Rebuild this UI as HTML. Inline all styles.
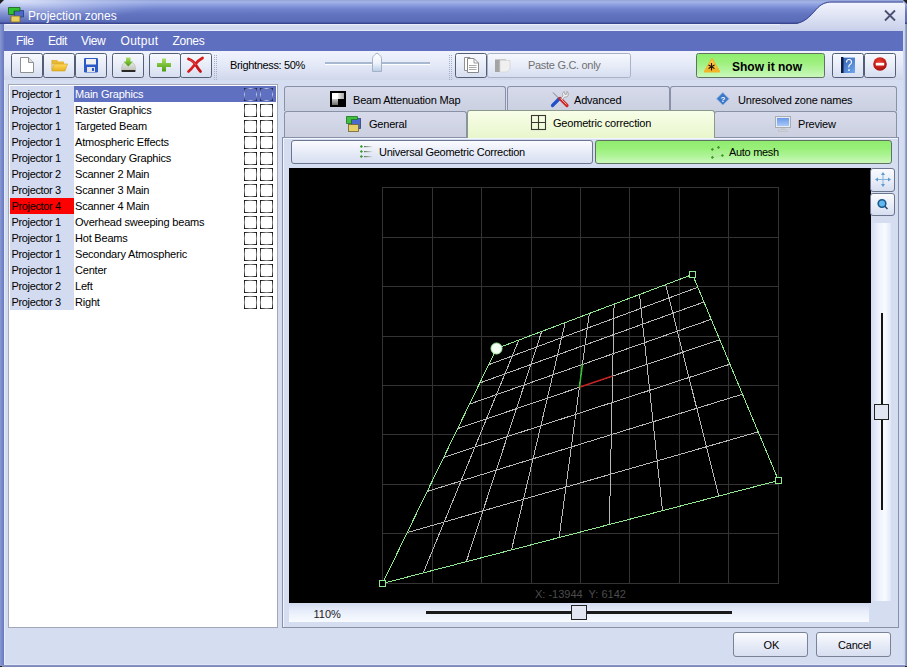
<!DOCTYPE html>
<html><head><meta charset="utf-8">
<style>
*{margin:0;padding:0;box-sizing:border-box}
html,body{width:907px;height:667px;overflow:hidden;background:#d5ddf1;font-family:"Liberation Sans",sans-serif;font-size:11px;color:#000}
.a{position:absolute}
.t{position:absolute;white-space:pre;line-height:1}
#title{left:0;top:0;width:907px;height:24px;background:linear-gradient(#95a3d4 0,#a2b4e8 2px,#8c9ede 5px,#7284cc 9px,#6274c0 14px,#5a6bb8 22px,#3a4690 23px)}
#menubar{left:4px;top:31px;width:899px;height:20px;background:#5f6fbf}
.menu{color:#fff;font-size:12px;top:35px;letter-spacing:-0.2px}
#toolbar{left:4px;top:51px;width:899px;height:29px;background:linear-gradient(#f0f3fd,#e4e9f7 50%,#d0d7eb)}
.tb{position:absolute;top:53px;height:25px;border:1px solid #545e76;border-radius:2.5px;background:linear-gradient(#f6f8fd,#e6ebf7 55%,#d6def0)}
#list{left:8px;top:84px;width:270px;height:544px;background:#fff;border:1px solid #a2a8ba}
.row{position:absolute;left:10px;width:266px;height:16px}
.c1{position:absolute;left:0;top:0;width:64px;height:16px;background:#d3dbf0}
.c1 span,.c2 span{position:absolute;top:3px;white-space:pre;line-height:1;letter-spacing:-0.2px}
.c1 span{left:1.5px;letter-spacing:-0.35px}
.c2{position:absolute;left:64px;top:0;width:202px;height:16px}
.c2 span{left:1px}
.cb{position:absolute;top:2px;width:13px;height:13px;background:linear-gradient(90deg,#0a0a0a,#8a8a8a 50%,#0a0a0a) top/100% 1px no-repeat,linear-gradient(90deg,#0a0a0a,#8a8a8a 50%,#0a0a0a) bottom/100% 1px no-repeat,linear-gradient(#0a0a0a,#8a8a8a 50%,#0a0a0a) left/1px 100% no-repeat,linear-gradient(#0a0a0a,#8a8a8a 50%,#0a0a0a) right/1px 100% no-repeat}
.sel .cb{background:linear-gradient(90deg,#101850,#b8c4f0 50%,#101850) top/100% 1px no-repeat,linear-gradient(90deg,#101850,#b8c4f0 50%,#101850) bottom/100% 1px no-repeat,linear-gradient(#101850,#b8c4f0 50%,#101850) left/1px 100% no-repeat,linear-gradient(#101850,#b8c4f0 50%,#101850) right/1px 100% no-repeat}
.tab{position:absolute;height:25px;border:1px solid #8a90a6;border-bottom:none;border-radius:3px 3px 0 0;background:linear-gradient(#d6daea,#cbd0e1)}
.tab span{position:absolute;top:8px;white-space:pre;line-height:1;letter-spacing:-0.2px}
#panel{left:282px;top:137px;width:617px;height:491px;border:1px solid #8a90a6;background:#d5ddf1;box-shadow:inset 1px 1px 0 #f2f5ff}
.btn{position:absolute;border:1px solid #6c7590;border-radius:3px}
#canvas{left:289px;top:168px;width:582px;height:435px;background:#000}
</style></head><body>
<!-- title bar -->
<div class="a" id="title"></div>
<svg class="a" style="left:0;top:0" width="907" height="32" viewBox="0 0 907 32">
<defs>
<linearGradient id="gsw" x1="0" y1="0" x2="0" y2="1"><stop offset="0" stop-color="#f2f4fd"/><stop offset="0.5" stop-color="#dde2f3"/><stop offset="1" stop-color="#c8d0ea"/></linearGradient>
<linearGradient id="gstrip" x1="0" y1="0" x2="0" y2="1"><stop offset="0" stop-color="#f4f6ff"/><stop offset="0.25" stop-color="#d4dbef"/><stop offset="0.75" stop-color="#d0d8ee"/><stop offset="1" stop-color="#eef2ff"/></linearGradient>
<linearGradient id="gglow" x1="0" y1="0" x2="1" y2="0"><stop offset="0" stop-color="#d0d8f0" stop-opacity="0.9"/><stop offset="0.15" stop-color="#c0cbee" stop-opacity="0.4"/><stop offset="0.5" stop-color="#c0cbee" stop-opacity="0"/></linearGradient>
<radialGradient id="gglow2" gradientUnits="userSpaceOnUse" cx="20" cy="0" r="140" gradientTransform="translate(20 0) scale(1 0.16) translate(-20 0)"><stop offset="0" stop-color="#e0e6fa" stop-opacity="0.9"/><stop offset="0.5" stop-color="#c8d2f4" stop-opacity="0.45"/><stop offset="1" stop-color="#b0c0f0" stop-opacity="0"/></radialGradient>
</defs>
<rect x="0" y="0" width="907" height="23" fill="url(#gglow2)"/>
<path d="M0,0 L4,0 L0,4 Z" fill="#202020"/>
<path d="M903,0 L907,0 L907,4 Z" fill="#202020"/>
<path d="M4,31 V27 Q4,24 7,24 H902 V31 Z" fill="url(#gstrip)"/>
<path d="M780,24 H794 C803,24 810,17 816,10 C821,4.5 825,2.5 832,2.5 H903 Q905,2.5 905,5 V31 H780 Z" fill="url(#gsw)"/>
<path d="M780,23.5 H794 C803,23.5 810,16.5 816,9.5 C821,4 825,2 832,2 H903" fill="none" stroke="#3a4690" stroke-width="1"/>
<rect x="0" y="23" width="780" height="1" fill="#3a4690"/>
<path d="M885,10.5 L895,20.5 M895,10.5 L885,20.5" stroke="#4a5070" stroke-width="1.8"/>
<!-- app icon -->
<path d="M14.5,10.5 H23.5 V17 H14.5 Z" fill="#4a68c8" stroke="#2a3a80" stroke-width="0.8"/>
<path d="M8.5,7.5 H20 V11 H14 V14.5 H8.5 Z" fill="#30c030" stroke="#186018" stroke-width="0.8"/>
<rect x="11" y="16" width="9" height="6" fill="#e8d060" stroke="#806820" stroke-width="0.8"/>
</svg>

<div class="t" style="left:28px;top:10px;font-size:12px;color:#fff">Projection zones</div>
<div class="a" style="left:0;top:24px;width:4px;height:643px;background:linear-gradient(90deg,#8898d0,#7888c8 50%,#6878c0)"></div>
<div class="a" style="left:4px;top:31px;width:1px;height:634px;background:#e4eaff"></div>
<div class="a" style="left:903px;top:31px;width:2px;height:636px;background:linear-gradient(90deg,#d4dcf4,#c4d2ec)"></div>
<div class="a" style="left:905px;top:24px;width:2px;height:643px;background:linear-gradient(90deg,#a4b2d8,#7484ac)"></div>
<div class="a" style="left:4px;top:664px;width:901px;height:1px;background:#e0e6fa"></div>
<div class="a" style="left:0;top:665px;width:907px;height:2px;background:linear-gradient(#8e98c4,#7a84b4)"></div>
<div class="a" style="left:0;top:666px;width:2px;height:1px;background:#222"></div><div class="a" style="left:905px;top:666px;width:2px;height:1px;background:#222"></div>
<!-- menu -->
<div class="a" id="menubar"></div>
<div class="t menu" style="left:16px;letter-spacing:-0.45px">File</div>
<div class="t menu" style="left:48px;letter-spacing:-0.45px">Edit</div>
<div class="t menu" style="left:81px;letter-spacing:-0.35px">View</div>
<div class="t menu" style="left:120.5px;letter-spacing:0.3px">Output</div>
<div class="t menu" style="left:172.5px;letter-spacing:-0.3px">Zones</div>
<!-- toolbar -->
<div class="a" id="toolbar"></div>
<div class="tb" style="left:11px;width:32px"></div>
<div class="tb" style="left:43px;width:32px"></div>
<div class="tb" style="left:75px;width:32px"></div>
<div class="tb" style="left:112px;width:32px"></div>
<div class="tb" style="left:149px;width:32px"></div>
<div class="tb" style="left:180px;width:32px"></div>
<div class="t" style="left:230px;top:60px;letter-spacing:-0.34px">Brightness: 50%</div>
<div class="tb" style="left:455px;width:32px"></div>
<div class="tb" style="left:487px;width:144px;border-color:#aab2c8"></div>
<div class="t" style="left:528px;top:60px;color:#707070;letter-spacing:-0.3px">Paste G.C. only</div>
<div class="tb" style="left:696px;width:129px;border-color:#5e7460;background:linear-gradient(#8eee6e,#9cf07c 35%,#b4f49e 70%,#ccf8bc)"></div>
<div class="t" style="left:732px;top:61px;font-weight:bold;font-size:12px">Show it now</div>
<div class="tb" style="left:832px;width:32px"></div>
<div class="tb" style="left:864px;width:32px"></div>
<svg class="a" style="left:0;top:0" width="907" height="90" viewBox="0 0 907 90">
<defs>
<linearGradient id="gfold" x1="0" y1="0" x2="0" y2="1"><stop offset="0" stop-color="#ffd95a"/><stop offset="1" stop-color="#e8b020"/></linearGradient>
<linearGradient id="ggreen" x1="0" y1="0" x2="0" y2="1"><stop offset="0" stop-color="#a8e060"/><stop offset="1" stop-color="#4a9a10"/></linearGradient>
<linearGradient id="gtray" x1="0" y1="0" x2="0" y2="1"><stop offset="0" stop-color="#e8ece4"/><stop offset="1" stop-color="#b8bcb4"/></linearGradient>
</defs>
<!-- new doc -->
<path d="M20.5,57.5 H28.5 L33.5,62.5 V72.5 H20.5 Z" fill="#fff" stroke="#909090"/>
<path d="M28.5,57.5 V62.5 H33.5" fill="#e0e0e0" stroke="#909090"/>
<!-- folder -->
<path d="M52,60 H57 L58.5,61.5 H64 V64 H52 Z" fill="#e8b838"/>
<path d="M52,71 L54,64 H67.5 L65,71 Z" fill="url(#gfold)" stroke="#d0a020" stroke-width="0.6"/>
<path d="M52,60 V71" stroke="#d8a828" stroke-width="1"/>
<!-- floppy -->
<rect x="84" y="58" width="14" height="14.5" rx="1.2" fill="#2a5ac8"/>
<rect x="86" y="59" width="10" height="5.5" fill="#f0f0f0"/>
<rect x="87" y="67" width="8" height="5" fill="#e4e4e4"/>
<rect x="92" y="68" width="2" height="3" fill="#2a5ac8"/>
<!-- import -->
<path d="M121.5,71 V67.5 Q122,63 125.5,62.5 H131.5 Q135,63 135.5,67.5 V71 Z" fill="url(#gtray)" stroke="#b8bcb0" stroke-width="0.6"/>
<rect x="121.5" y="70" width="14" height="2" rx="0.8" fill="#282828"/>
<path d="M126,57.5 H130.5 V61.5 H133 L128.3,66.5 L123.5,61.5 H126 Z" fill="url(#ggreen)"/>
<!-- plus -->
<path d="M162,58.5 H166 V63 H171 V67 H166 V71.5 H162 V67 H157 V63 H162 Z" fill="url(#ggreen)"/>
<!-- red X -->
<path d="M188.5,59 Q194,61 196.5,66 Q199,70 200.5,71.5" fill="none" stroke="#c81414" stroke-width="2.8" stroke-linecap="round"/>
<path d="M202.5,58 Q197,61 194,65.5 Q191,69.5 188.5,71.5" fill="none" stroke="#d81c1c" stroke-width="2.8" stroke-linecap="round"/>
<path d="M189.5,59.5 Q194,61.5 196,65" fill="none" stroke="#f06060" stroke-width="0.8"/>
<!-- copy icon -->
<path d="M464.5,57.5 H470 L472.5,60 V70.5 H464.5 Z" fill="#fff" stroke="#909090"/>
<path d="M467.5,58.5 H474 L478.5,63 V72.5 H467.5 Z" fill="#fff" stroke="#888"/>
<path d="M474,58.5 V63 H478.5" fill="none" stroke="#999"/>
<path d="M469,65.5 H476.5 M469,67.5 H476.5 M469,69.5 H476.5" stroke="#a8a8a8"/>
<!-- paste disabled icon -->
<rect x="495" y="59.5" width="5" height="12.5" fill="#a4a4a4"/>
<path d="M500,60.5 H510 V69 L507,72 H500 Z" fill="#f0f0f0" stroke="#d4d4d4" stroke-width="0.8"/>
<path d="M497,59.5 H506" stroke="#c8c8c8"/>
<!-- show it now warning -->
<path d="M712,58.3 Q712.6,58.3 713,59 L720,71 Q720.3,72.6 719,72.6 H705 Q703.7,72.6 704,71 L711,59 Q711.4,58.3 712,58.3 Z" fill="#f4b428"/>
<path d="M712,59.5 L717,68 H707 Z" fill="#fcd050" opacity="0.7"/>
<g stroke="#201000" stroke-width="1.1"><path d="M711.5,63 V70.5 M708.5,65 L714.5,68.5 M714.5,65 L708.5,68.5"/></g>
<!-- help book -->
<defs><linearGradient id="gbook" x1="0" y1="0" x2="1" y2="1"><stop offset="0" stop-color="#2a58a8"/><stop offset="1" stop-color="#70a8f0"/></linearGradient>
<radialGradient id="gstop" cx="0.45" cy="0.35" r="0.7"><stop offset="0" stop-color="#f04030"/><stop offset="1" stop-color="#a00808"/></radialGradient></defs>
<rect x="841" y="57" width="14" height="16" fill="url(#gbook)"/>
<rect x="841" y="57" width="2.5" height="16" fill="#0c1c40"/>
<path d="M843.5,57.5 H855" stroke="#a8c8f0" stroke-width="1"/>
<path d="M846.5,62.5 Q846.5,59.5 849,59.5 Q851.5,59.5 851.5,62 Q851.5,64 849.5,65 Q848.8,65.5 848.8,67.5" fill="none" stroke="#fff" stroke-width="1.1"/>
<rect x="848.2" y="69.3" width="1.6" height="1.6" fill="#fff"/>
<!-- stop -->
<circle cx="880" cy="64" r="6.8" fill="url(#gstop)"/>
<rect x="875.8" y="62.8" width="8.4" height="2.7" fill="#fff"/>
<!-- grippers -->
<g fill="#a8b0c8">
<rect x="214" y="55" width="1" height="1"/><rect x="216" y="55" width="1" height="1"/><rect x="214" y="57" width="1" height="1"/><rect x="216" y="57" width="1" height="1"/><rect x="214" y="59" width="1" height="1"/><rect x="216" y="59" width="1" height="1"/><rect x="214" y="61" width="1" height="1"/><rect x="216" y="61" width="1" height="1"/><rect x="214" y="63" width="1" height="1"/><rect x="216" y="63" width="1" height="1"/><rect x="214" y="65" width="1" height="1"/><rect x="216" y="65" width="1" height="1"/><rect x="214" y="67" width="1" height="1"/><rect x="216" y="67" width="1" height="1"/><rect x="214" y="69" width="1" height="1"/><rect x="216" y="69" width="1" height="1"/><rect x="214" y="71" width="1" height="1"/><rect x="216" y="71" width="1" height="1"/><rect x="214" y="73" width="1" height="1"/><rect x="216" y="73" width="1" height="1"/><rect x="214" y="75" width="1" height="1"/><rect x="216" y="75" width="1" height="1"/><rect x="214" y="77" width="1" height="1"/><rect x="216" y="77" width="1" height="1"/><rect x="214" y="79" width="1" height="1"/><rect x="216" y="79" width="1" height="1"/><rect x="449" y="55" width="1" height="1"/><rect x="451" y="55" width="1" height="1"/><rect x="449" y="57" width="1" height="1"/><rect x="451" y="57" width="1" height="1"/><rect x="449" y="59" width="1" height="1"/><rect x="451" y="59" width="1" height="1"/><rect x="449" y="61" width="1" height="1"/><rect x="451" y="61" width="1" height="1"/><rect x="449" y="63" width="1" height="1"/><rect x="451" y="63" width="1" height="1"/><rect x="449" y="65" width="1" height="1"/><rect x="451" y="65" width="1" height="1"/><rect x="449" y="67" width="1" height="1"/><rect x="451" y="67" width="1" height="1"/><rect x="449" y="69" width="1" height="1"/><rect x="451" y="69" width="1" height="1"/><rect x="449" y="71" width="1" height="1"/><rect x="451" y="71" width="1" height="1"/><rect x="449" y="73" width="1" height="1"/><rect x="451" y="73" width="1" height="1"/><rect x="449" y="75" width="1" height="1"/><rect x="451" y="75" width="1" height="1"/><rect x="449" y="77" width="1" height="1"/><rect x="451" y="77" width="1" height="1"/><rect x="449" y="79" width="1" height="1"/><rect x="451" y="79" width="1" height="1"/></g>
</svg>
<svg class="a" style="left:320px;top:50px" width="120" height="30" viewBox="320 50 120 30">
<rect x="325" y="62" width="105" height="2" fill="#a8b8d0"/>
<rect x="325" y="64" width="105" height="1" fill="#ffffff"/>
<path d="M372.5,71.5 V58.5 Q372.5,56.5 375,54.5 L377,53 L379,54.5 Q381.5,56.5 381.5,58.5 V71.5 Z" fill="url(#gthumb)" stroke="#a4b2c8"/>
<defs><linearGradient id="gthumb" x1="0" y1="0" x2="0" y2="1"><stop offset="0" stop-color="#ffffff"/><stop offset="0.55" stop-color="#eef3fb"/><stop offset="1" stop-color="#b8cce6"/></linearGradient></defs>
</svg>

<!-- list -->
<div class="a" id="list"></div>
<div class="row sel" style="top:86px"><div class="c1" style="background:#d3dbf0"><span>Projector 1</span></div><div class="c2" style="background:#6070c0;color:#fff"><span>Main Graphics</span></div><div class="cb" style="left:234px"></div><div class="cb" style="left:250px"></div></div>
<div class="row" style="top:102px"><div class="c1" style="background:#d3dbf0"><span>Projector 1</span></div><div class="c2"><span>Raster Graphics</span></div><div class="cb" style="left:234px"></div><div class="cb" style="left:250px"></div></div>
<div class="row" style="top:118px"><div class="c1" style="background:#d3dbf0"><span>Projector 1</span></div><div class="c2"><span>Targeted Beam</span></div><div class="cb" style="left:234px"></div><div class="cb" style="left:250px"></div></div>
<div class="row" style="top:134px"><div class="c1" style="background:#d3dbf0"><span>Projector 1</span></div><div class="c2"><span>Atmospheric Effects</span></div><div class="cb" style="left:234px"></div><div class="cb" style="left:250px"></div></div>
<div class="row" style="top:150px"><div class="c1" style="background:#d3dbf0"><span>Projector 1</span></div><div class="c2"><span>Secondary Graphics</span></div><div class="cb" style="left:234px"></div><div class="cb" style="left:250px"></div></div>
<div class="row" style="top:166px"><div class="c1" style="background:#d3dbf0"><span>Projector 2</span></div><div class="c2"><span>Scanner 2 Main</span></div><div class="cb" style="left:234px"></div><div class="cb" style="left:250px"></div></div>
<div class="row" style="top:182px"><div class="c1" style="background:#d3dbf0"><span>Projector 3</span></div><div class="c2"><span>Scanner 3 Main</span></div><div class="cb" style="left:234px"></div><div class="cb" style="left:250px"></div></div>
<div class="row" style="top:198px"><div class="c1" style="background:#ff0000"><span>Projector 4</span></div><div class="c2"><span>Scanner 4 Main</span></div><div class="cb" style="left:234px"></div><div class="cb" style="left:250px"></div></div>
<div class="row" style="top:214px"><div class="c1" style="background:#d3dbf0"><span>Projector 1</span></div><div class="c2"><span>Overhead sweeping beams</span></div><div class="cb" style="left:234px"></div><div class="cb" style="left:250px"></div></div>
<div class="row" style="top:230px"><div class="c1" style="background:#d3dbf0"><span>Projector 1</span></div><div class="c2"><span>Hot Beams</span></div><div class="cb" style="left:234px"></div><div class="cb" style="left:250px"></div></div>
<div class="row" style="top:246px"><div class="c1" style="background:#d3dbf0"><span>Projector 1</span></div><div class="c2"><span>Secondary Atmospheric</span></div><div class="cb" style="left:234px"></div><div class="cb" style="left:250px"></div></div>
<div class="row" style="top:262px"><div class="c1" style="background:#d3dbf0"><span>Projector 1</span></div><div class="c2"><span>Center</span></div><div class="cb" style="left:234px"></div><div class="cb" style="left:250px"></div></div>
<div class="row" style="top:278px"><div class="c1" style="background:#d3dbf0"><span>Projector 2</span></div><div class="c2"><span>Left</span></div><div class="cb" style="left:234px"></div><div class="cb" style="left:250px"></div></div>
<div class="row" style="top:294px"><div class="c1" style="background:#d3dbf0"><span>Projector 3</span></div><div class="c2"><span>Right</span></div><div class="cb" style="left:234px"></div><div class="cb" style="left:250px"></div></div>
<!-- tabs -->
<div class="tab" style="left:284px;top:86px;width:222px"><span style="left:68px">Beam Attenuation Map</span></div>
<div class="tab" style="left:507px;top:86px;width:163px"><span style="left:66px">Advanced</span></div>
<div class="tab" style="left:670px;top:86px;width:227px"><span style="left:67px">Unresolved zone names</span></div>
<div class="tab" style="left:284px;top:111px;width:183px;height:26px"><span style="left:84px;top:7px">General</span></div>
<div class="tab" style="left:714px;top:111px;width:183px;height:26px"><span style="left:83px;top:7px">Preview</span></div>
<div class="a" id="panel"></div>
<div class="tab" style="left:467px;top:110px;width:248px;height:28px;background:linear-gradient(#f8fee8,#e8f6cc);border-color:#8a9a8a"><span style="left:85px;top:7px">Geometric correction</span></div>
<div class="btn" style="left:291px;top:140px;width:302px;height:24px;background:linear-gradient(#fafbff,#e4e9f6 60%,#d8dff0)"></div>
<div class="t" style="left:379px;top:147px;letter-spacing:-0.25px">Universal Geometric Correction</div>
<div class="btn" style="left:595px;top:140px;width:297px;height:24px;border-color:#5e7460;background:linear-gradient(#90ec70,#9af07a 35%,#b0f49a 70%,#ccf8bc)"></div>
<div class="t" style="left:729px;top:147px;letter-spacing:-0.3px">Auto mesh</div>
<svg class="a" style="left:280px;top:84px" width="627" height="84" viewBox="280 84 627 84">
<defs>
<linearGradient id="gbl" x1="0" y1="0" x2="0" y2="1"><stop offset="0" stop-color="#c8c8c8"/><stop offset="1" stop-color="#6a6a6a"/></linearGradient>
<linearGradient id="gtr" x1="0" y1="0" x2="1" y2="0"><stop offset="0" stop-color="#e8e8e8"/><stop offset="1" stop-color="#a8a8a8"/></linearGradient>
<linearGradient id="gscr" x1="0" y1="0" x2="0" y2="1"><stop offset="0" stop-color="#6a98e8"/><stop offset="1" stop-color="#a8c8f8"/></linearGradient>
</defs>
<!-- beam attenuation -->
<rect x="331" y="92" width="14" height="14" fill="#fff" stroke="#000" stroke-width="2"/>
<rect x="338" y="93" width="6" height="6" fill="url(#gtr)"/>
<rect x="332" y="99" width="6" height="6" fill="url(#gbl)"/>
<rect x="338" y="99" width="6" height="6" fill="#000"/>
<!-- advanced: screwdriver & wrench -->
<path d="M553,92.5 L559.5,99" stroke="#808080" stroke-width="1"/>
<path d="M552.5,105.5 L559,99" stroke="#2050c8" stroke-width="3.2" stroke-linecap="round"/>
<path d="M567,105.5 L560,98.5" stroke="#d02828" stroke-width="3.2" stroke-linecap="round"/>
<path d="M566.5,104.5 L560.5,98.5" stroke="#ffd0d0" stroke-width="0.8"/>
<path d="M561,98 L563,96 Q561.5,93 564,91.5 L565,94.5 L567,94 L567,91.3 Q569.5,93 568,96 Q566,97.5 564.5,97 L562.5,99.5 Z" fill="#f0f0f0" stroke="#909090" stroke-width="0.7"/>
<!-- unresolved diamond -->
<path d="M722.8,92.6 L729,98.8 L722.8,105 L716.6,98.8 Z" fill="#3a78c8" stroke="#8ab0e0" stroke-width="0.8"/>
<text x="720.5" y="102" font-family="Liberation Sans" font-weight="bold" font-size="8" fill="#fff">?</text>
<!-- general icon -->
<rect x="351.5" y="118.5" width="9" height="10" fill="#4a6ad0" stroke="#30407a" stroke-width="0.8"/>
<path d="M346.5,116.5 H357.5 V119.5 H351.5 V123.5 H346.5 Z" fill="#40c040" stroke="#207020" stroke-width="0.8"/>
<rect x="348.5" y="124.5" width="10" height="7" fill="#e8d068" stroke="#706030" stroke-width="0.8"/>
<!-- geometric grid -->
<g fill="none" stroke="#383830" stroke-width="1.1"><rect x="531.5" y="115.5" width="14" height="14"/><path d="M538.5,115.5 V129.5 M531.5,122.5 H545.5"/></g>
<!-- preview monitor -->
<rect x="775.5" y="116.5" width="15" height="11" fill="#e8ecf0" stroke="#a8acb4"/>
<rect x="777" y="118" width="12" height="8" fill="url(#gscr)"/>
<rect x="781" y="128" width="4" height="2" fill="#c8ccd0"/>
<rect x="778.5" y="130" width="9" height="1.6" fill="#d8dce0" stroke="#b0b4b8" stroke-width="0.5"/>
<!-- universal GC -->
<g fill="#3a9a2a">
<path d="M361.4,145 L363,146.5 L361.4,148 L359.8,146.5 Z"/>
<path d="M361.4,150 L363,151.5 L361.4,153 L359.8,151.5 Z"/>
<path d="M361.4,155 L363,156.5 L361.4,158 L359.8,156.5 Z"/>
</g>
<defs><linearGradient id="gline" x1="0" y1="0" x2="1" y2="0"><stop offset="0" stop-color="#607858"/><stop offset="1" stop-color="#607858" stop-opacity="0"/></linearGradient></defs>
<rect x="364" y="146" width="9" height="1.2" fill="url(#gline)"/>
<rect x="364" y="151" width="9" height="1.2" fill="url(#gline)"/>
<rect x="364" y="156" width="9" height="1.2" fill="url(#gline)"/>
<!-- auto mesh -->
<path d="M712.4,149.4 L718.5,147.4 L722.4,155.5 L712.4,157.4 Z" fill="none" stroke="#b8e0a8" stroke-width="0.8"/>
<g fill="#3a9a20">
<path d="M712.4,147.8 L714,149.4 L712.4,151 L710.8,149.4 Z"/>
<path d="M718.5,145.8 L720.1,147.4 L718.5,149 L716.9,147.4 Z"/>
<path d="M722.4,153.9 L724,155.5 L722.4,157.1 L720.8,155.5 Z"/>
<path d="M712.4,155.8 L714,157.4 L712.4,159 L710.8,157.4 Z"/>
</g>
</svg>

<div class="a" id="canvas"></div>
<svg class="a" style="left:0;top:0" width="907" height="667" viewBox="0 0 907 667">
<g stroke="#343434" stroke-width="1" shape-rendering="crispEdges"><line x1="382.5" y1="187" x2="382.5" y2="584"/><line x1="382" y1="187.5" x2="779" y2="187.5"/><line x1="432.5" y1="187" x2="432.5" y2="584"/><line x1="382" y1="237.5" x2="779" y2="237.5"/><line x1="481.5" y1="187" x2="481.5" y2="584"/><line x1="382" y1="286.5" x2="779" y2="286.5"/><line x1="531.5" y1="187" x2="531.5" y2="584"/><line x1="382" y1="336.5" x2="779" y2="336.5"/><line x1="580.5" y1="187" x2="580.5" y2="584"/><line x1="382" y1="385.5" x2="779" y2="385.5"/><line x1="629.5" y1="187" x2="629.5" y2="584"/><line x1="382" y1="434.5" x2="779" y2="434.5"/><line x1="679.5" y1="187" x2="679.5" y2="584"/><line x1="382" y1="484.5" x2="779" y2="484.5"/><line x1="728.5" y1="187" x2="728.5" y2="584"/><line x1="382" y1="533.5" x2="779" y2="533.5"/><line x1="778.5" y1="187" x2="778.5" y2="584"/><line x1="382" y1="583.5" x2="779" y2="583.5"/></g>
<g stroke="#b8b8b8" stroke-width="1" shape-rendering="crispEdges"><line x1="518.8" y1="340.1" x2="423.3" y2="572.9"/><line x1="488.7" y1="364.7" x2="697.8" y2="287.3"/><line x1="541.7" y1="331.4" x2="466.3" y2="561.7"/><line x1="479.7" y1="383.0" x2="704.0" y2="302.0"/><line x1="565.2" y1="322.6" x2="511.5" y2="550.0"/><line x1="469.5" y1="404.1" x2="711.2" y2="319.3"/><line x1="589.3" y1="313.5" x2="559.1" y2="537.6"/><line x1="457.7" y1="428.6" x2="719.7" y2="339.7"/><line x1="614.1" y1="304.1" x2="609.4" y2="524.5"/><line x1="443.7" y1="457.3" x2="729.9" y2="364.2"/><line x1="639.5" y1="294.5" x2="662.5" y2="510.7"/><line x1="427.2" y1="491.4" x2="742.5" y2="394.2"/><line x1="665.6" y1="284.6" x2="718.8" y2="496.0"/><line x1="407.2" y1="532.6" x2="758.2" y2="431.9"/></g>
<line x1="579.4" y1="387.3" x2="612.5" y2="376.0" stroke="#c02020" stroke-width="1.5"/>
<line x1="579.4" y1="387.3" x2="582.4" y2="364.5" stroke="#30c030" stroke-width="1.5"/>
<polygon points="496.5,348.5 692.5,274.5 778.5,480.5 382.5,583.5" fill="none" stroke="#90e890" stroke-width="1" shape-rendering="crispEdges"/>
<g fill="#000" stroke="#90e890" stroke-width="1" shape-rendering="crispEdges">
<rect x="689.5" y="271.5" width="6" height="6"/><rect x="775.5" y="477.5" width="6" height="6"/><rect x="379.5" y="580.5" width="6" height="6"/></g>
<circle cx="496.5" cy="348.5" r="5.5" fill="#f4fff4" stroke="#a0f0a0" stroke-width="1"/>
</svg>
<div class="t" style="left:535px;top:589px;color:#4c4c4c;letter-spacing:0px">X: -13944  Y: 6142</div>
<div class="btn" style="left:870px;top:168px;width:25px;height:24px;border-color:#6c7590;background:linear-gradient(#fafbff,#e6ebf7 60%,#d6def0)"></div>
<div class="btn" style="left:870px;top:193px;width:25px;height:23px;border-color:#6c7590;background:linear-gradient(#fafbff,#e6ebf7 60%,#d6def0)"></div>
<div class="a" style="left:871px;top:223px;width:20px;height:378px;background:linear-gradient(90deg,#d4dcf2,#eef2fc 40%,#f8fbff 70%,#e0e6f6)"></div>
<div class="a" style="left:881px;top:313px;width:2px;height:197px;background:#151515"></div>
<div class="a" style="left:874px;top:404px;width:15px;height:16px;border:1.5px solid #222;background:#e2e6f2"></div>
<div class="a" style="left:289px;top:603px;width:580px;height:19px;background:linear-gradient(#d2daf0,#e8eefa 45%,#f8fbff)"></div>
<div class="t" style="left:313.5px;top:608.5px;color:#222">110%</div>
<div class="a" style="left:426px;top:611px;width:306px;height:3px;background:#1a1a1a"></div>
<div class="a" style="left:571px;top:605px;width:16px;height:15px;border:1.5px solid #222;background:#e2e6f2"></div>
<svg class="a" style="left:871px;top:168px" width="24" height="48" viewBox="871 168 24 48">
<g stroke="#80b4dc" stroke-width="1" fill="none"><path d="M883,174 V185 M877,179.5 H889"/></g>
<g fill="#5a9ad0"><path d="M883,172 L885,175 H881 Z"/><path d="M883,187 L885,184 H881 Z"/><path d="M875,179.5 L878,177.5 V181.5 Z"/><path d="M891,179.5 L888,177.5 V181.5 Z"/></g>
<circle cx="882" cy="203.5" r="3.8" fill="#60b8f0" stroke="#1a5a88" stroke-width="1.6"/>
<path d="M884.8,206.3 L887.5,209" stroke="#1a4a70" stroke-width="1.5"/>
</svg>

<!-- bottom -->
<div class="btn" style="left:733px;top:632px;width:75px;height:25px;border-color:#7a8298;background:linear-gradient(#fafbff,#e4e9f6 60%,#d8dff0)"></div>
<div class="t" style="left:763.5px;top:640px">OK</div>
<div class="btn" style="left:816px;top:632px;width:75px;height:25px;border-color:#7a8298;background:linear-gradient(#fafbff,#e4e9f6 60%,#d8dff0)"></div>
<div class="t" style="left:838px;top:640px;letter-spacing:-0.2px">Cancel</div>
</body></html>
